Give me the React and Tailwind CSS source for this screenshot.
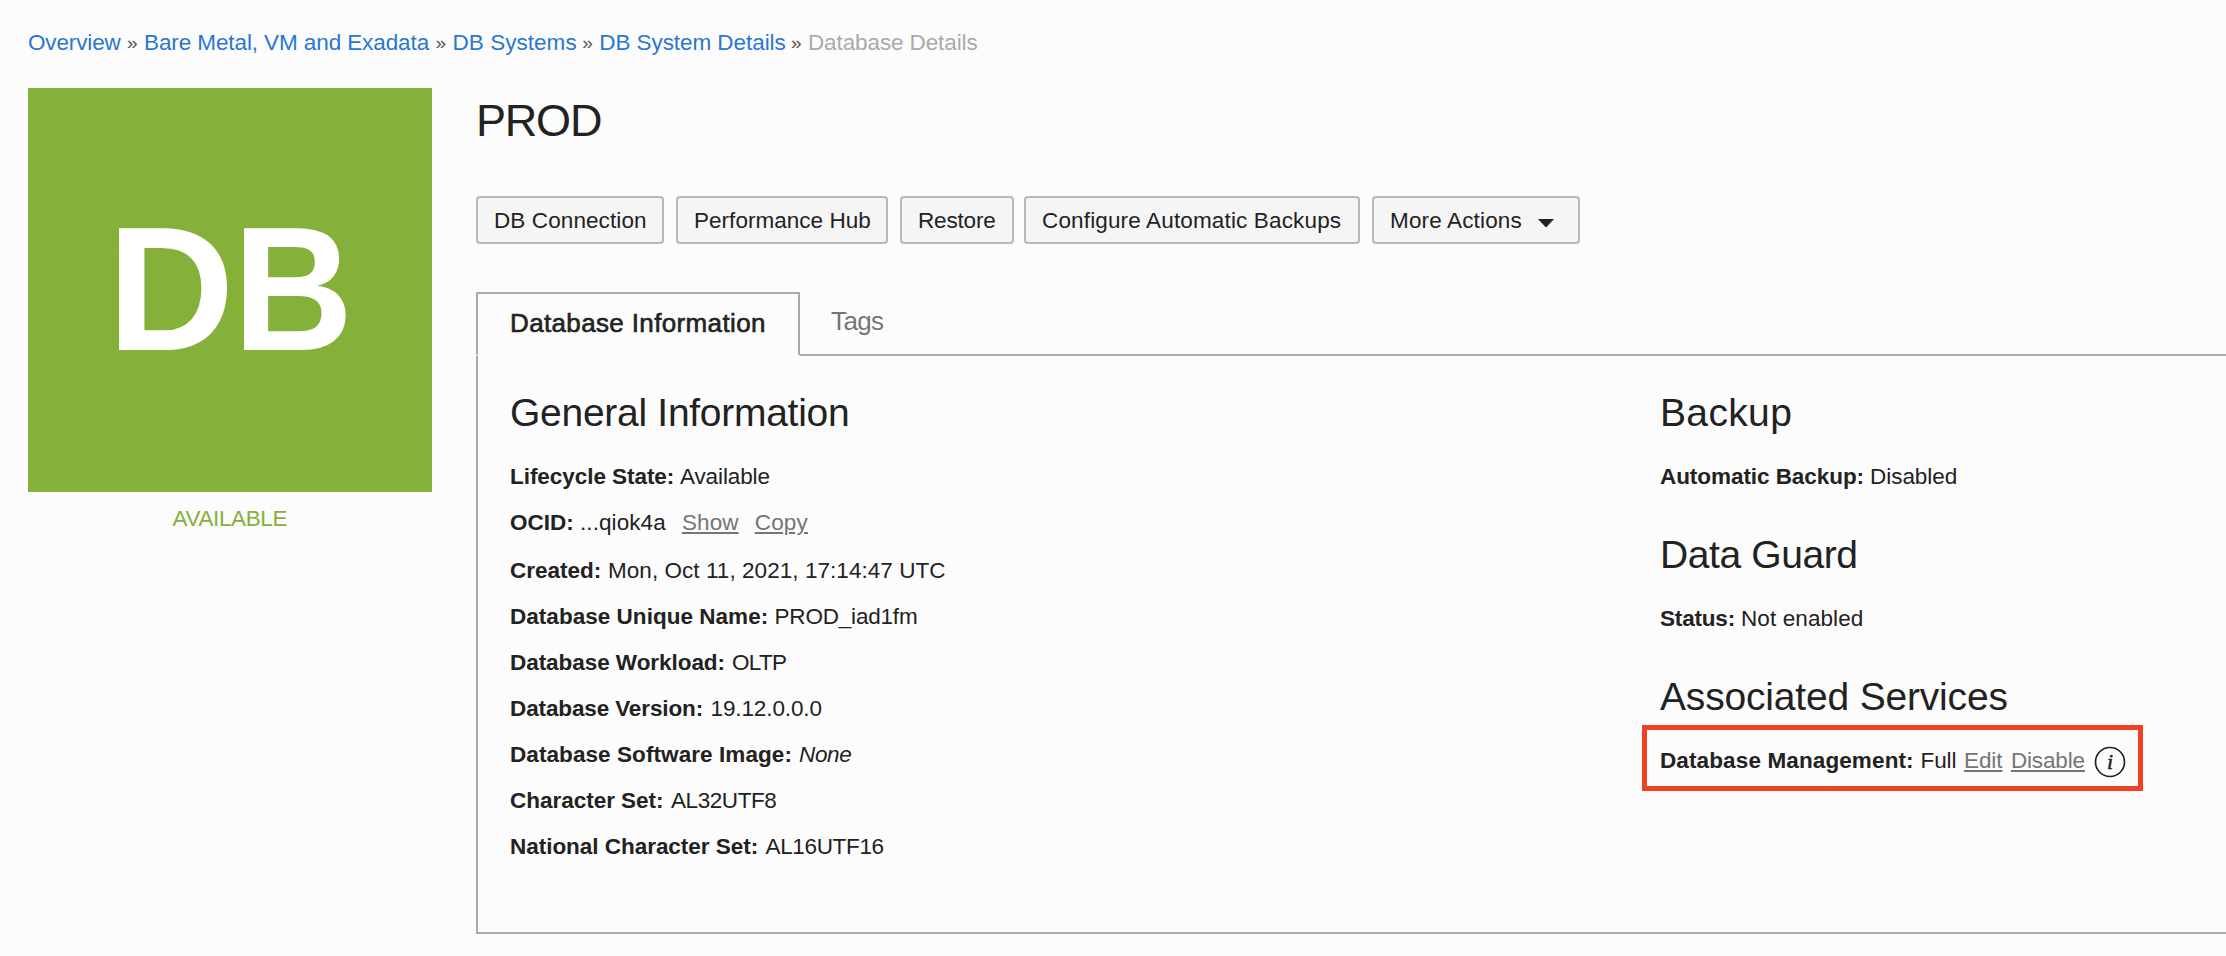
const SMALL = 'text-[22.5px] leading-[25px]';

const crumbs = [
  { text: 'Overview', box: 'w-[100.5px] tracking-[-0.14px]' },
  { text: 'Bare Metal, VM and Exadata', box: 'w-[293.1px] tracking-[-0.1px]' },
  { text: 'DB Systems', box: 'w-[131.1px] tracking-[0.03px]' },
  { text: 'DB System Details', box: 'w-[193.3px] tracking-[-0.06px]' },
];

const buttons = [
  { text: 'DB Connection', box: 'w-[188px] mr-3 tracking-[0.1px]' },
  { text: 'Performance Hub', box: 'w-[212px] mr-3 tracking-[0.03px]' },
  { text: 'Restore', box: 'w-[114px] mr-2.5 tracking-[-0.17px]' },
  { text: 'Configure Automatic Backups', box: 'w-[336px] mr-3 tracking-[0.15px]' },
];

const general = [
  { label: 'Created:', box: 'w-[98px]', value: 'Mon, Oct 11, 2021, 17:14:47 UTC', style: 'tracking-[0.05px]' },
  { label: 'Database Unique Name:', box: 'w-[264.5px] tracking-[0.03px]', value: 'PROD_iad1fm', style: 'tracking-[-0.19px]' },
  { label: 'Database Workload:', box: 'w-[222px] tracking-[-0.05px]', value: 'OLTP', style: 'tracking-[-0.7px]' },
  { label: 'Database Version:', box: 'w-[200.5px] tracking-[-0.12px]', value: '19.12.0.0.0', style: 'tracking-[-0.11px]' },
  { label: 'Database Software Image:', box: 'w-[289px] tracking-[0.08px]', value: 'None', style: 'italic tracking-[-0.36px]' },
  { label: 'Character Set:', box: 'w-[161px] tracking-[-0.02px]', value: 'AL32UTF8', style: 'tracking-[-0.43px]' },
  { label: 'National Character Set:', box: 'w-[255.5px] tracking-[-0.03px]', value: 'AL16UTF16', style: 'tracking-[-0.34px]' },
];

function Heading({ children, className }) {
  return <h2 className={`mb-[30px] whitespace-nowrap text-[39px] leading-[43px] ${className}`}>{children}</h2>;
}

function Row({ label, box, children }) {
  return (
    <div className={`flex whitespace-nowrap ${SMALL}`}>
      <span className={`shrink-0 font-bold ${box}`}>{label}</span>
      {children}
    </div>
  );
}

function Action({ children, className }) {
  return (
    <a className={`text-[#757575] underline decoration-2 underline-offset-2 ${className}`}>{children}</a>
  );
}

function InfoIcon() {
  return (
    <svg className="-mt-[2px] ml-[9px] size-8 shrink-0" viewBox="0 0 32 32">
      <circle cx="16" cy="16" r="14.5" fill="none" stroke="#222" strokeWidth="1.7" />
      <text
        x="16"
        y="22.5"
        textAnchor="middle"
        className="font-['Liberation_Serif',serif] text-[22px] italic"
        fill="#222"
        stroke="#222"
        strokeWidth="0.5"
      >
        i
      </text>
    </svg>
  );
}

export default function App() {
  return (
    <div className="h-[956px] w-[2226px] overflow-hidden bg-[#fcfcfc] pt-[30px] font-['Liberation_Sans',Arial,sans-serif] text-[#222]">
      <nav className={`flex whitespace-nowrap pl-7 text-[#2a76d2] ${SMALL}`}>
        {crumbs.map((c) => (
          <span key={c.text} className="flex">
            <a className={`block shrink-0 ${c.box}`}>{c.text}</a>
            <span className="-ml-[1.5px] w-[17px] shrink-0 text-[19px] text-[#555]">»</span>
          </span>
        ))}
        <span className="tracking-[-0.11px] text-[#aaa]">Database Details</span>
      </nav>

      <div className="mt-[33px] flex pl-7">
        <aside className="w-[404px] shrink-0">
          <div className="flex h-[404px] bg-[#85b03a] pl-[79.3px] pt-[102.5px] text-[176px] font-bold leading-[196px] text-white">
            <span className="w-[126px]">D</span>
            <span className="origin-left scale-x-[0.945]">B</span>
          </div>
          <div className={`mt-[14px] pl-[144.5px] tracking-[-0.37px] text-[#85b03a] ${SMALL}`}>AVAILABLE</div>
        </aside>

        <main className="ml-11 flex-1 pt-[7px]">
          <h1 className="text-[45px] leading-[51px] tracking-[-1.2px]">PROD</h1>

          <div className={`mt-[50px] flex whitespace-nowrap ${SMALL}`}>
            {buttons.map((b) => (
              <button key={b.text} className={`h-12 shrink-0 rounded-[4px] border-2 border-[#b6bac0] bg-[#f5f5f5] pb-[9px] pl-4 pt-[10px] text-left ${b.box}`}>
                {b.text}
              </button>
            ))}
            <button className="flex h-12 w-[208px] shrink-0 rounded-[4px] border-2 border-[#b6bac0] bg-[#f5f5f5] pl-4 pt-[10px] tracking-[0.15px]">
              More Actions
              <svg className="ml-4 mt-[11px] h-[9px] w-4" viewBox="0 0 16 9">
                <path d="M0 0h16l-8 8.5z" fill="#222" />
              </svg>
            </button>
          </div>

          <div className="mt-12 flex whitespace-nowrap text-[26px] leading-[30px]">
            <div className="h-16 w-[324px] shrink-0 border-2 border-[#aaa] border-b-[#fcfcfc] pl-8 pt-[14px] tracking-[0.36px] [-webkit-text-stroke:0.6px_#222]">
              Database Information
            </div>
            <div className="flex-1 border-b-2 border-[#aaa] pl-[31px] pt-[14px] tracking-[-0.6px] text-[#757575]">Tags</div>
          </div>

          <div className="flex h-[578px] border-b-2 border-l-2 border-[#aaa] pt-[35px]">
            <section className="w-[1182px] shrink-0 pl-8">
              <Heading className="tracking-[-0.28px]">General Information</Heading>
              <div className="flex flex-col gap-[21px]">
                <Row label="Lifecycle State:" box="w-[170px] tracking-[-0.05px]">
                  <span className="tracking-[-0.12px]">Available</span>
                </Row>
                <div className="mb-0.5">
                  <Row label="OCID:" box="w-[70px]">
                    <span className="w-[102px] tracking-[0.08px]">...qiok4a</span>
                    <Action className="mr-[16px] tracking-[0.1px]">Show</Action>
                    <Action className="tracking-[0.2px]">Copy</Action>
                  </Row>
                </div>
                {general.map((g) => (
                  <Row key={g.label} label={g.label} box={g.box}>
                    <span className={g.style}>{g.value}</span>
                  </Row>
                ))}
              </div>
            </section>

            <section className="flex flex-col gap-[44px]">
              <div>
                <Heading className="tracking-[0.35px]">Backup</Heading>
                <Row label="Automatic Backup:" box="w-[210px] tracking-[-0.06px]">
                  <span className="tracking-[-0.04px]">Disabled</span>
                </Row>
              </div>
              <div>
                <Heading className="tracking-[-0.4px]">Data Guard</Heading>
                <Row label="Status:" box="w-[81px] tracking-[-0.18px]">
                  <span className="tracking-[0.1px]">Not enabled</span>
                </Row>
              </div>
              <div>
                <Heading className="tracking-[-0.18px]">Associated Services</Heading>
                <div className="-ml-[18.5px] -mt-[23px] h-[66px] w-[501px] border-[5px] border-[#ef4023] pl-[13.5px] pt-[18px]">
                  <Row label="Database Management:" box="w-[260.5px] tracking-[0.12px]">
                    <span className="w-[43.5px] tracking-[-0.1px]">Full</span>
                    <Action className="mr-[8.5px] tracking-[-0.1px]">Edit</Action>
                    <Action className="tracking-[-0.15px]">Disable</Action>
                    <InfoIcon />
                  </Row>
                </div>
              </div>
            </section>
          </div>
        </main>
      </div>
    </div>
  );
}
